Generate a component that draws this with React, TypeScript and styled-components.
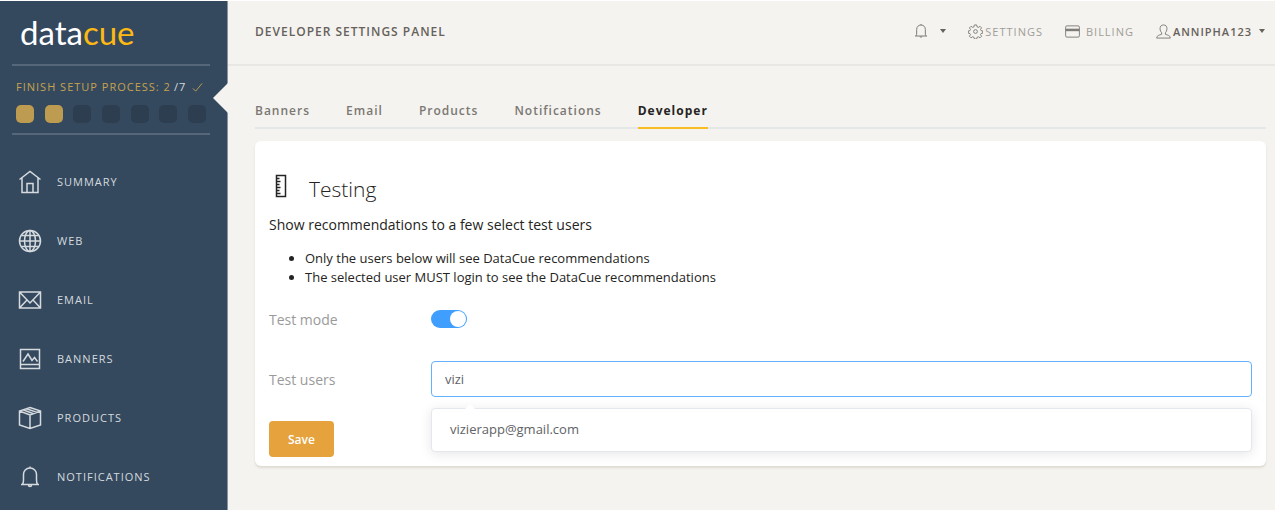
import React, { useState } from "react";
import styled, { createGlobalStyle } from "styled-components";

const GlobalStyle = createGlobalStyle`
  *, *::before, *::after { box-sizing: border-box; }
  body {
    margin: 0;
    background: #f4f3ef;
    color: #252422;
    font-family: "Open Sans", "Noto Sans", sans-serif;
    font-size: 14px;
  }
  h1, h2, p, ul { margin: 0; padding: 0; font-weight: 400; }
  a { color: inherit; text-decoration: none; }
  button, input { font: inherit; }
`;

const Page = styled.div`
  display: flex;
  min-height: 100vh;
  border-top: 1px solid #ffffff;
`;

const Sidebar = styled.aside`
  position: relative;
  flex: 0 0 228px;
  min-width: 0;
  padding: 0 12px;
  background: #34495e;
  border-right: 1px solid #8793a0;
  color: #d5dade;
`;

const Notch = styled.span`
  position: absolute;
  top: 82px;
  right: -1px;
  border: 15px solid transparent;
  border-left: 0;
  border-right-color: #f4f3ef;
`;

const Logo = styled.a`
  display: block;
  height: 65px;
  margin-right: 5px;
  padding-left: 8px;
  border-bottom: 2px solid #566779;
  color: #ffffff;
  font-family: Lato, "Open Sans", sans-serif;
  font-size: 33px;
  font-weight: 400;
  line-height: 62px;
`;

const LogoAccent = styled.span`
  color: #fdb913;
`;

const Setup = styled.section`
  margin-right: 5px;
  height: 69px;
  padding: 11px 4px 0;
  border-bottom: 2px solid #566779;
`;

const SetupTitle = styled.p`
  display: flex;
  align-items: center;
  gap: 3px;
  color: #c7a24f;
  font-size: 11px;
  font-weight: 500;
  line-height: 20px;
  letter-spacing: 1px;
  white-space: nowrap;
`;

const SetupTotal = styled.span`
  color: #d5dade;
  margin-right: 3px;
`;

const Steps = styled.div`
  display: flex;
  justify-content: space-between;
  margin-top: 8px;
`;

const Step = styled.span<{ $done: boolean }>`
  width: 18px;
  height: 18px;
  border-radius: 5px;
  background: ${(p) => (p.$done ? "#bd9b50" : "#2c3e50")};
`;

const SideNav = styled.nav`
  padding-top: 17px;
`;

const SideLink = styled.a`
  display: flex;
  align-items: center;
  gap: 15px;
  height: 59px;
  padding-left: 6px;
  font-size: 11px;
  font-weight: 500;
  letter-spacing: 1px;
`;

const Main = styled.main`
  flex: 1;
  min-width: 0;
`;

const Header = styled.header`
  display: flex;
  align-items: center;
  justify-content: space-between;
  height: 65px;
  padding: 0 10px 3px 27px;
  border-bottom: 2px solid #e8e7e3;
`;

const PageTitle = styled.h1`
  color: #66615b;
  font-size: 12px;
  font-weight: 600;
  letter-spacing: 1px;
`;

const Actions = styled.nav`
  display: flex;
  align-items: center;
  gap: 22px;
`;

const Action = styled.a<{ $strong?: boolean; $gap?: number }>`
  display: flex;
  align-items: center;
  gap: ${(p) => p.$gap ?? 2}px;
  color: ${(p) => (p.$strong ? "#66615b" : "#9f9d99")};
  font-size: 11px;
  font-weight: ${(p) => (p.$strong ? 600 : 500)};
  letter-spacing: 1px;
  svg { color: #807c77; }
`;

const Caret = styled.span`
  margin-left: 5px;
  border: 3px solid transparent;
  border-top: 4px solid #66615b;
  border-bottom: 0;
`;

const Content = styled.div`
  padding: 33px 9px 40px 27px;
`;

const Tabs = styled.nav`
  display: flex;
  gap: 36px;
  height: 30px;
  margin-bottom: 12px;
  border-bottom: 2px solid #e4e6e8;
`;

const Tab = styled.a<{ $active: boolean }>`
  height: 30px;
  border-bottom: 2px solid ${(p) => (p.$active ? "#f9bd22" : "transparent")};
  color: ${(p) => (p.$active ? "#252422" : "#7b7874")};
  font-size: 12px;
  font-weight: ${(p) => (p.$active ? 700 : 600)};
  line-height: 24px;
  letter-spacing: 1px;
`;

const Card = styled.section`
  padding: 33px 14px 9px;
  border-radius: 6px;
  background: #ffffff;
  box-shadow: 0 2px 2px rgba(204, 197, 185, 0.5);
`;

const CardTitle = styled.h2`
  display: flex;
  align-items: flex-start;
  gap: 16px;
  font-size: 21px;
  font-weight: 300;
  line-height: 30px;
`;

const Lead = styled.p`
  margin-top: 9px;
  line-height: 24px;
`;

const Notes = styled.ul`
  margin-top: 12px;
  padding-left: 36px;
  font-size: 13px;
  line-height: 19px;
`;

const Row = styled.div`
  display: flex;
  align-items: center;
  height: 36px;
  margin-top: 14px;
`;

const UsersRow = styled(Row)`
  margin-top: 24px;
`;

const Label = styled.label`
  flex: 0 0 162px;
  color: #9a9a9a;
  font-size: 14px;
`;

const Switch = styled.input`
  appearance: none;
  display: flex;
  align-items: center;
  width: 36px;
  height: 18px;
  margin: 0;
  padding: 0 1px;
  border-radius: 9px;
  background: #c8ccd4;
  &::before {
    content: "";
    width: 16px;
    height: 16px;
    border-radius: 50%;
    background: #ffffff;
  }
  &:checked {
    justify-content: flex-end;
    background: #409eff;
  }
`;

const Combo = styled.div`
  position: relative;
  flex: 1;
`;

const TextBox = styled.input`
  display: block;
  width: 100%;
  height: 36px;
  padding: 0 13px;
  border: 1px solid #66b1ff;
  border-radius: 4px;
  outline: none;
  color: #606266;
  background: #ffffff;
  font-size: 13px;
`;

const Suggestions = styled.div`
  position: absolute;
  top: 47px;
  left: 0;
  right: 0;
  padding: 4px 0;
  border: 1px solid #e4e7ed;
  border-radius: 4px;
  background: #ffffff;
  box-shadow: 0 2px 12px rgba(0, 0, 0, 0.1);
  &::before {
    content: "";
    position: absolute;
    top: -5px;
    left: 33px;
    border: 5px solid transparent;
    border-top: 0;
    border-bottom-color: #ffffff;
  }
`;

const Suggestion = styled.button`
  display: block;
  width: 100%;
  height: 34px;
  padding: 0 18px 2px;
  border: 0;
  background: none;
  color: #606266;
  font-size: 13px;
  text-align: left;
`;

const SaveButton = styled.button`
  height: 36px;
  margin-top: 24px;
  padding: 0 19px;
  border: 0;
  border-radius: 4px;
  background: #e6a23c;
  color: #ffffff;
  font-size: 12px;
  font-weight: 600;
`;

const art = {
  home: <path d="M1.5 9.5 12 1.5l10.5 8M4 8v14.5h16V8M9 22.5v-9h6v9" />,
  globe: (
    <>
      <circle cx="12" cy="12" r="10.5" />
      <ellipse cx="12" cy="12" rx="5.5" ry="10.5" />
      <path d="M12 1.5v21M1.5 12h21M3.5 6.5h17M3.5 17.5h17" />
    </>
  ),
  mail: <path d="M1.5 4h21v16h-21zM1.5 4 12 15 22.5 4M1.5 20l7.5-8M22.5 20 15 12" />,
  picture: <path d="M2.5 2.5h19v19h-19zM2.5 17.5h19M5 14.5l5-7.5 4 6.5 2.5-3 3 4" />,
  box: <path d="M12 1.5 22.5 5v14L12 22.5 1.5 19V5zM1.5 5 12 9l10.5-4M12 9v13.5M5 3.8l10.500 4M8.5 2.7 19 6.4" />,
  bell: <path d="M3 19.5h18M4.500 19.500c1-1.500 1-2.500 1-4.500V9.500c0-3.500 2.500-6.500 6.500-6.500s6.500 3 6.500 6.500V15c0 2 0 3 1 4.500M12 1.500V3M10.500 20c0 2 3 2 3 0" />,
  gear: (
    <>
      <circle cx="12" cy="12" r="3" />
      <path d="M10.2 1.5h3.600l.6 3 2.200.9 2.600-1.700 2.500 2.500-1.700 2.600.8 1.700 2.700.6v3.600l-2.700.6-.8 1.700 1.700 2.600-2.500 2.500-2.600-1.700-2.200.9-.6 2.700h-3.600l-.6-2.700-2.200-.9-2.600 1.700-2.500-2.500L4 17l-.8-1.700-2.700-.6v-3.600l2.700-.6L4 8.800 2.300 6.200l2.500-2.500 2.600 1.700 2.200-.9z" />
    </>
  ),
  card: (
    <>
      <rect x="1" y="3" width="22" height="18" rx="2" />
      <path d="M1 9.500h22" strokeWidth="4" />
    </>
  ),
  user: <path d="M12 1.500c-4 0-5.500 2.500-5.500 6 0 3 1.200 5 2.500 6.500v2.500C5 18 1.500 18 1 22.500h22c-.5-4.500-4-4.500-8-6V14c1.300-1.500 2.500-3.500 2.500-6.500 0-3.500-1.500-6-5.500-6z" />,
  ruler: <path d="M7.5 1.500h9v21h-9zM7.500 4.500h3M7.500 7.500h4M7.500 10.500h3M7.500 13.500h4M7.500 16.500h3M7.500 19.500h4" />,
  check: <path d="M2 14l6 6L22 3" />,
};

type IconName = keyof typeof art;

const Icon = ({ name, size = 24, stroke = 1 }: { name: IconName; size?: number; stroke?: number }) => (
  <svg
    width={size}
    height={size}
    viewBox="0 0 24 24"
    fill="none"
    stroke="currentColor"
    strokeWidth={stroke}
    aria-hidden="true"
  >
    {art[name]}
  </svg>
);

const sections: { label: string; icon: IconName }[] = [
  { label: "SUMMARY", icon: "home" },
  { label: "WEB", icon: "globe" },
  { label: "EMAIL", icon: "mail" },
  { label: "BANNERS", icon: "picture" },
  { label: "PRODUCTS", icon: "box" },
  { label: "NOTIFICATIONS", icon: "bell" },
];

const tabs = ["Banners", "Email", "Products", "Notifications", "Developer"];

export default function App() {
  const [testMode, setTestMode] = useState(true);
  const [query, setQuery] = useState("vizi");

  return (
    <>
      <GlobalStyle />
      <Page>
        <Sidebar>
          <Notch />
          <Logo href="#">
            data<LogoAccent>cue</LogoAccent>
          </Logo>
          <Setup>
            <SetupTitle>
              <span>FINISH SETUP PROCESS: 2</span>
              <SetupTotal>/7</SetupTotal>
              <Icon name="check" size={11} stroke={2} />
            </SetupTitle>
            <Steps>
              {[1, 2, 3, 4, 5, 6, 7].map((n) => (
                <Step key={n} $done={n <= 2} />
              ))}
            </Steps>
          </Setup>
          <SideNav>
            {sections.map((s) => (
              <SideLink key={s.label} href="#">
                <Icon name={s.icon} stroke={1.5} />
                {s.label}
              </SideLink>
            ))}
          </SideNav>
        </Sidebar>
        <Main>
          <Header>
            <PageTitle>DEVELOPER SETTINGS PANEL</PageTitle>
            <Actions>
              <Action href="#" $gap={6} aria-label="Alerts">
                <Icon name="bell" size={16} stroke={1.5} />
                <Caret />
              </Action>
              <Action href="#">
                <Icon name="gear" size={15} stroke={1.5} />
                SETTINGS
              </Action>
              <Action href="#" $gap={6}>
                <Icon name="card" size={15} stroke={1.5} />
                BILLING
              </Action>
              <Action href="#" $strong>
                <Icon name="user" size={15} stroke={1.5} />
                ANNIPHA123
                <Caret />
              </Action>
            </Actions>
          </Header>
          <Content>
            <Tabs>
              {tabs.map((t) => (
                <Tab key={t} href="#" $active={t === "Developer"}>
                  {t}
                </Tab>
              ))}
            </Tabs>
            <Card>
              <CardTitle>
                <Icon name="ruler" stroke={1.5} />
                Testing
              </CardTitle>
              <Lead>Show recommendations to a few select test users</Lead>
              <Notes>
                <li>Only the users below will see DataCue recommendations</li>
                <li>The selected user MUST login to see the DataCue recommendations</li>
              </Notes>
              <Row>
                <Label htmlFor="test-mode">Test mode</Label>
                <Switch
                  id="test-mode"
                  type="checkbox"
                  role="switch"
                  checked={testMode}
                  onChange={(e) => setTestMode(e.target.checked)}
                />
              </Row>
              <UsersRow>
                <Label htmlFor="test-users">Test users</Label>
                <Combo>
                  <TextBox
                    id="test-users"
                    type="text"
                    autoComplete="off"
                    value={query}
                    onChange={(e) => setQuery(e.target.value)}
                  />
                  <Suggestions>
                    <Suggestion type="button">vizierapp@gmail.com</Suggestion>
                  </Suggestions>
                </Combo>
              </UsersRow>
              <SaveButton type="button">Save</SaveButton>
            </Card>
          </Content>
        </Main>
      </Page>
    </>
  );
}
